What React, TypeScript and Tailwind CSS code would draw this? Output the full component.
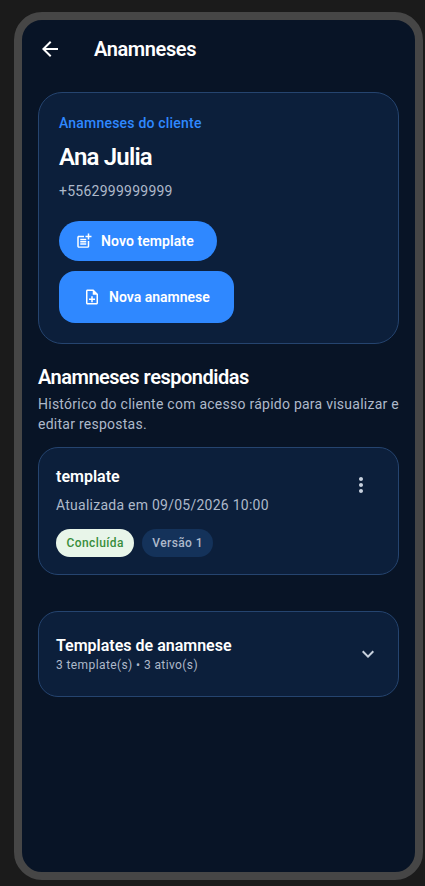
import { MdArrowBack, MdExpandMore, MdMoreVert, MdOutlineNoteAdd, MdOutlinePostAdd } from "react-icons/md";

const roboto = { fontFamily: "Roboto, sans-serif" };

export default function App() {
  return (
    <div style={roboto} className="h-[886px] w-[425px] overflow-hidden bg-[#1b1b1b] pl-[14px] pr-[2px] pt-3">
      <div className="h-[868px] w-[409px] rounded-[28px] border-8 border-[#464646] bg-[#081426]">
        <header className="flex h-[58px] items-center pl-4 text-white">
          <MdArrowBack size={24} />
          <h1 className="ml-8 text-xl font-semibold leading-none tracking-[-0.4px]">Anamneses</h1>
        </header>

        <div className="px-4 pt-[14px]">
          <section className="h-[252px] rounded-3xl border border-[#25446f] bg-[#0c1f3b] px-5 pt-[21px]">
            <p className="text-sm font-medium leading-[18px] tracking-[0.2px] text-[#2f88ff]">Anamneses do cliente</p>
            <p className="mt-[9px] text-2xl font-semibold leading-8 tracking-[-0.8px] text-white">Ana Julia</p>
            <p className="mt-[8px] text-sm leading-5 tracking-[0.25px] text-[#aeb9ca]">+5562999999999</p>
            <div className="mt-5 flex flex-col items-start gap-[10px]">
              <button className="flex h-10 w-[158px] items-center gap-2 rounded-full bg-[#2f88ff] pl-4 text-sm font-semibold tracking-[0.08px] text-white">
                <MdOutlinePostAdd size={18} />
                Novo template
              </button>
              <button className="flex h-[52px] w-[175px] items-center gap-2 rounded-2xl bg-[#2f88ff] pl-6 text-sm font-semibold text-white">
                <MdOutlineNoteAdd size={18} />
                Nova anamnese
              </button>
            </div>
          </section>

          <h2 className="mt-[19px] text-xl font-semibold leading-7 tracking-[-0.5px] text-white">Anamneses respondidas</h2>
          <p className="mt-[3px] text-sm leading-5 tracking-[0.25px] text-[#aeb9ca]">
            Histórico do cliente com acesso rápido para visualizar e editar respostas.
          </p>

          <section className="relative mt-[13px] h-[128px] rounded-[20px] border border-[#25446f] bg-[#0c1f3b] px-[17px] pt-[19px]">
            <p className="text-base font-semibold leading-5 text-white">template</p>
            <p className="mt-[8px] text-sm leading-5 tracking-[0.25px] text-[#aeb9ca]">Atualizada em 09/05/2026 10:00</p>
            <div className="mt-[14px] flex gap-2">
              <span className="flex h-7 items-center rounded-full bg-[#e8f5e9] px-[10.5px] text-xs font-medium tracking-[0.4px] text-[#388e3c]">
                Concluída
              </span>
              <span className="flex h-7 items-center rounded-full bg-[#14325a] px-[10px] text-xs font-medium tracking-[0.4px] text-[#aeb9ca]">
                Versão 1
              </span>
            </div>
            <MdMoreVert size={24} className="absolute right-[25px] top-[25px] text-[#c8d1de]" />
          </section>

          <section className="mt-9 flex h-[86px] items-center justify-between rounded-[20px] border border-[#25446f] bg-[#0c1f3b] pl-[17px] pr-[18px]">
            <div className="pt-[1px]">
              <p className="text-base font-semibold leading-5 text-white">Templates de anamnese</p>
              <p className="mt-[1px] text-xs leading-4 tracking-[0.4px] text-[#aeb9ca]">3 template(s) • 3 ativo(s)</p>
            </div>
            <MdExpandMore size={24} className="text-[#c8d1de]" />
          </section>
        </div>
      </div>
    </div>
  );
}
